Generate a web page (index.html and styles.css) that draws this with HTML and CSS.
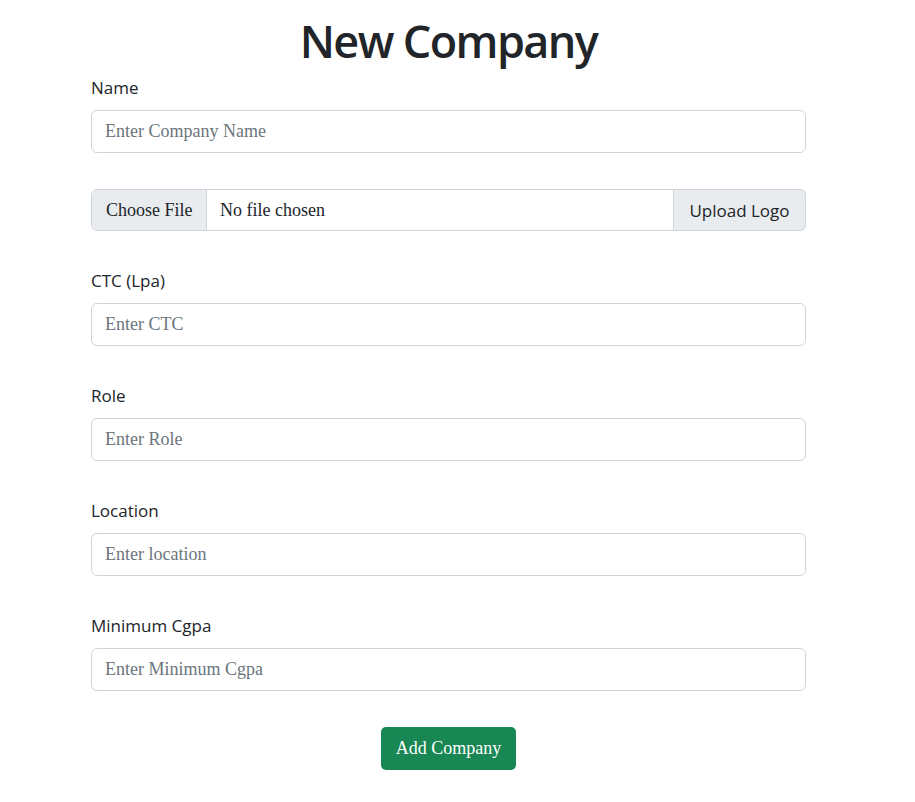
FILE: index.html
```html
<!DOCTYPE html>
<html>
<head>
<meta charset="utf-8">
<link rel="stylesheet" href="styles.css">
</head>
<body>
<div class="page">
  <form class="form">
    <h1 class="title">New Company</h1>
    <div class="group first">
      <label class="label">Name</label>
      <div class="input placeholder">Enter Company Name</div>
    </div>
    <div class="file-group">
      <div class="file-input">
        <span class="file-btn">Choose File</span>
        <span class="file-text">No file chosen</span>
      </div>
      <span class="group-text">Upload Logo</span>
    </div>
    <div class="group">
      <label class="label">CTC (Lpa)</label>
      <div class="input placeholder">Enter CTC</div>
    </div>
    <div class="group">
      <label class="label">Role</label>
      <div class="input placeholder">Enter Role</div>
    </div>
    <div class="group">
      <label class="label">Location</label>
      <div class="input placeholder">Enter location</div>
    </div>
    <div class="group">
      <label class="label">Minimum Cgpa</label>
      <div class="input placeholder">Enter Minimum Cgpa</div>
    </div>
    <div class="actions">
      <button type="button" class="btn">Add Company</button>
    </div>
  </form>
</div>
</body>
</html>
```
FILE: styles.css
```css
* { box-sizing: border-box; }
body {
  margin: 0;
  background: #fff;
  color: #212529;
  font-family: "Open Sans", "Noto Sans", sans-serif;
}
.page { width: 897px; }
.form {
  width: 715px;
  margin: 0 auto;
  display: flex;
  flex-direction: column;
}
.title {
  margin: 12px 0 0;
  text-align: center;
  font-size: 45px;
  font-weight: 600;
  line-height: 58px;
  letter-spacing: -1.6px;
}
.group {
  display: flex;
  flex-direction: column;
  gap: 8px;
  margin-top: 40px;
}
.group.first { margin-top: 8px; }
.label {
  font-size: 17px;
  line-height: 24px;
  position: relative;
  top: -2px;
}
.input {
  height: 43px;
  border: 1px solid #ced4da;
  border-radius: 6px;
  padding: 7px 13px;
  font-family: "Liberation Serif", serif;
  font-size: 18px;
  line-height: 27px;
}
.placeholder { color: #6c757d; }
.file-group {
  margin-top: 36px;
  display: flex;
  height: 42px;
}
.file-input {
  flex: 1;
  display: flex;
  border: 1px solid #ced4da;
  border-radius: 6px 0 0 6px;
  overflow: hidden;
  font-family: "Liberation Serif", serif;
  font-size: 18px;
  white-space: nowrap;
}
.file-btn {
  flex-shrink: 0;
  background: #e9ecef;
  border-right: 1px solid #ced4da;
  padding: 0 14px;
  display: flex;
  align-items: center;
  width: 115px;
}
.file-text {
  display: flex;
  align-items: center;
  padding-left: 13px;
}
.group-text {
  flex-shrink: 0;
  display: flex;
  align-items: center;
  justify-content: center;
  width: 132px;
  background: #e9ecef;
  border: 1px solid #ced4da;
  border-left: none;
  border-radius: 0 6px 6px 0;
  font-size: 17px;
  white-space: nowrap;
}
.actions {
  display: flex;
  justify-content: center;
  margin-top: 36px;
}
.btn {
  width: 135px;
  height: 43px;
  border: none;
  border-radius: 5px;
  background: #198754;
  color: #fff;
  font-family: "Liberation Serif", serif;
  font-size: 18px;
  padding: 0;
}
```
